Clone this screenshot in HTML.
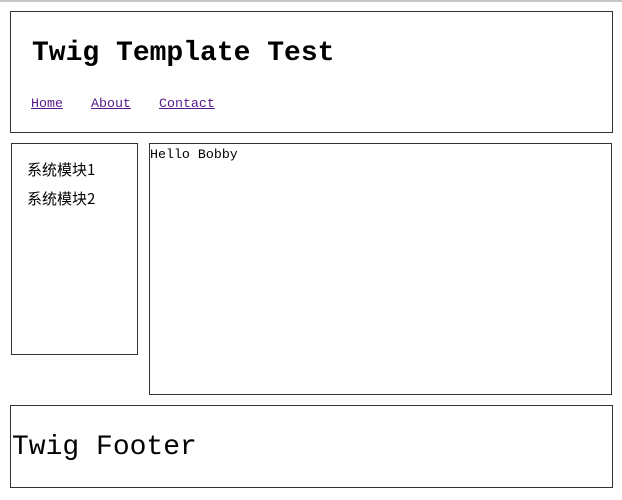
<!DOCTYPE html>
<html><head><meta charset="utf-8"><style>
html,body{margin:0;padding:0;background:#fff;width:622px;height:500px;overflow:hidden;position:relative}
.b{position:absolute;border:1px solid #333;box-sizing:border-box}
.m{font-family:"Liberation Mono","Noto Sans CJK SC",monospace;color:#000;position:absolute;white-space:nowrap}
a{color:#551a8b;text-decoration:underline}
</style></head><body>
<div style="position:absolute;left:0;top:0;width:622px;height:2px;background:#c8c8c8"></div>
<div class="b" style="left:10px;top:11px;width:603px;height:122px"></div>
<div class="m" style="left:32px;top:36px;font-size:28px;line-height:36px;font-weight:bold">Twig Template Test</div>
<div class="m" style="left:31px;top:96px;font-size:13.3px;line-height:16px"><a>Home</a></div>
<div class="m" style="left:91px;top:96px;font-size:13.3px;line-height:16px"><a>About</a></div>
<div class="m" style="left:159px;top:96px;font-size:13.3px;line-height:16px"><a>Contact</a></div>
<div class="b" style="left:11px;top:143px;width:127px;height:212px"></div>
<div class="m" style="left:27px;top:160px;font-size:15px;line-height:20px;font-family:'Noto Sans CJK SC',sans-serif">系统模块1</div>
<div class="m" style="left:27px;top:189px;font-size:15px;line-height:20px;font-family:'Noto Sans CJK SC',sans-serif">系统模块2</div>
<div class="b" style="left:149px;top:143px;width:463px;height:252px"></div>
<div class="m" style="left:150px;top:147px;font-size:13.3px;line-height:16px">Hello Bobby</div>
<div class="b" style="left:10px;top:405px;width:603px;height:83px"></div>
<div class="m" style="left:12px;top:430px;font-size:28px;line-height:36px">Twig Footer</div>
</body></html>
